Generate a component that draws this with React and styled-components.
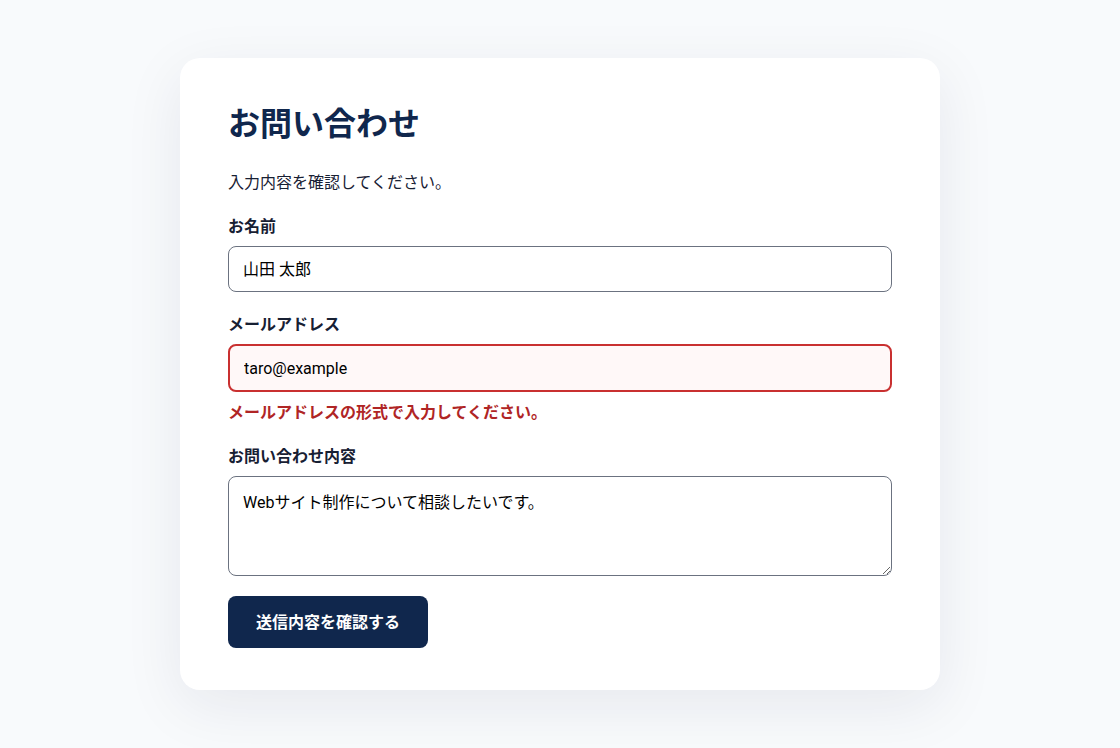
import React from "react"
import styled, { createGlobalStyle } from "styled-components"

const GlobalStyle = createGlobalStyle`
  * {
    box-sizing: border-box;
  }

  body {
    margin: 0;
    background: #f8fafc;
    color: #172033;
    font-family: Inter, "Noto Sans CJK JP", sans-serif;
    font-size: 16px;
    line-height: 24px;
  }
`

const Page = styled.main`
  padding: 58px 24px;
`

const Card = styled.section`
  max-width: 760px;
  margin: 0 auto;
  padding: 40px 48px 42px;
  border-radius: 20px;
  background: #fff;
  box-shadow: 0 16px 60px rgba(20, 24, 62, 0.08);
`

const Title = styled.h1`
  margin: 0 0 20px;
  color: #10274d;
  font-size: 32px;
  line-height: 52px;
`

const Lead = styled.p`
  margin: 0 0 20px;
`

const Form = styled.form`
  display: flex;
  flex-direction: column;
  align-items: flex-start;
  gap: 20px;
`

const Field = styled.div`
  display: flex;
  flex-direction: column;
  gap: 8px;
  width: 100%;
`

const Label = styled.label`
  font-weight: 700;
`

const Input = styled.input`
  width: 100%;
  padding: 11px 14px 9px;
  border: ${({ $invalid }) => ($invalid ? "2px solid #c93030" : "1px solid #6b7280")};
  border-radius: 8px;
  background: ${({ $invalid }) => ($invalid ? "#fff8f8" : "#fff")};
  color: #000;
  font-family: Roboto, "Noto Sans CJK JP", sans-serif;
  font-size: 16px;
  line-height: 24px;
`

const Textarea = styled.textarea`
  display: block;
  width: 100%;
  height: 100px;
  padding: 14px;
  border: 1px solid #6b7280;
  border-radius: 8px;
  background: #fff;
  color: #000;
  font-family: Roboto, "Noto Sans CJK JP", sans-serif;
  font-size: 16px;
  line-height: 24px;
  resize: vertical;
`

const ErrorText = styled.p`
  margin: 0;
  color: #b02525;
  font-weight: 700;
`

const Button = styled.button`
  padding: 14px 28px;
  border: 0;
  border-radius: 8px;
  background: #10274d;
  color: #fff;
  font: inherit;
  font-weight: 700;
  cursor: pointer;
`

const App = () => {
  return (
    <>
      <GlobalStyle />
      <Page>
        <Card>
          <Title>お問い合わせ</Title>
          <Lead>入力内容を確認してください。</Lead>
          <Form noValidate>
            <Field>
              <Label htmlFor="name">お名前</Label>
              <Input id="name" type="text" defaultValue="山田 太郎" />
            </Field>
            <Field>
              <Label htmlFor="email">メールアドレス</Label>
              <Input
                id="email"
                type="email"
                defaultValue="taro@example"
                aria-invalid="true"
                aria-describedby="email-error"
                $invalid
              />
              <ErrorText id="email-error">
                メールアドレスの形式で入力してください。
              </ErrorText>
            </Field>
            <Field>
              <Label htmlFor="message">お問い合わせ内容</Label>
              <Textarea
                id="message"
                defaultValue="Webサイト制作について相談したいです。"
              />
            </Field>
            <Button type="submit">送信内容を確認する</Button>
          </Form>
        </Card>
      </Page>
    </>
  )
}

export default App
